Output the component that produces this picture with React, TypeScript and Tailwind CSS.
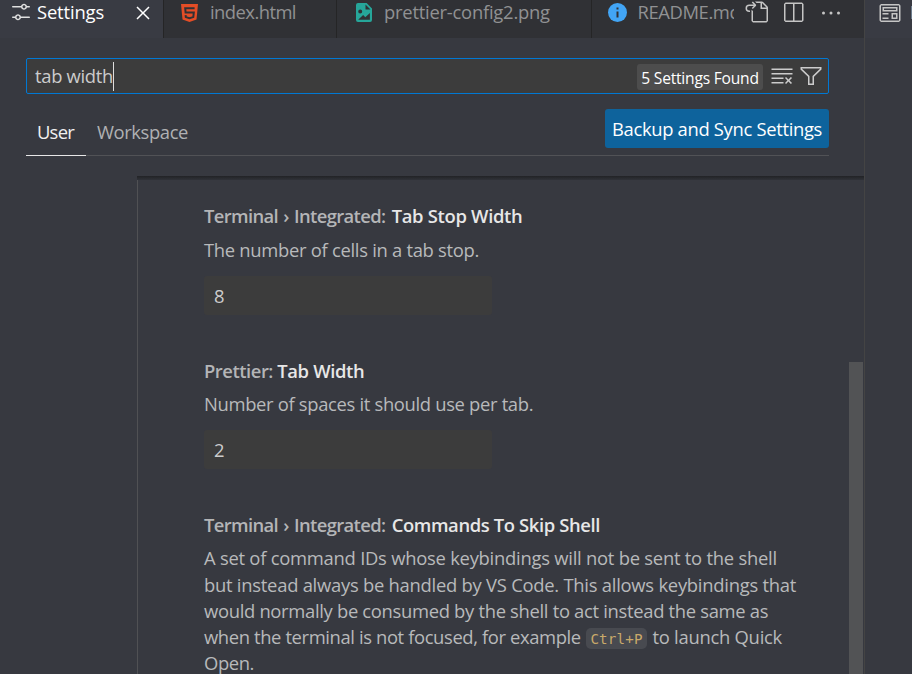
import type { ReactNode } from 'react';
import {
  VscSettings, VscClose, VscGoToFile, VscSplitHorizontal, VscEllipsis, VscClearAll, VscFilter, VscPreview,
} from 'react-icons/vsc';

function HtmlIcon() {
  return (
    <svg className="block h-[18px] w-[17px]" viewBox="0 0 17 18">
      <path fill="#e44d26" d="M0 0h17l-1.5 15.6L8.5 18l-7-2.4z" />
      <path fill="none" stroke="#303135" strokeWidth="2" d="M13.6 4.2H4.2l.4 4.3h8.2l-.5 4.6-3.8 1.2-3.7-1.2-.2-2" />
    </svg>
  );
}

function ImageIcon() {
  return (
    <svg className="block h-[19px] w-4" viewBox="0 0 16 19">
      <path
        fill="#26a69a"
        fillRule="evenodd"
        d="M2 0h8.6L16 5.4V17a2 2 0 0 1-2 2H2a2 2 0 0 1-2-2V2a2 2 0 0 1 2-2zM9.5 1.6v5h5zM4.2 6.6a2 2 0 1 0 0 4 2 2 0 0 0 0-4zM2.2 16.8h11.7V10l-4.6 4.2-2.2-2.1z"
      />
    </svg>
  );
}

function InfoIcon() {
  return (
    <svg className="block h-[19px] w-[19px]" viewBox="0 0 19 19">
      <circle cx="9.5" cy="9.5" r="9.5" fill="#42a5f5" />
      <path fill="#303135" d="M8.5 4.6h2v2h-2zM8.5 8.4h2v6h-2z" />
    </svg>
  );
}

function Setting({ category, name, nameClass, categoryClass, className, children }: {
  category: string; name: string; nameClass: string; categoryClass: string; className: string; children: ReactNode;
}) {
  return (
    <section className={className}>
      <h3 className="flex h-[26px] items-center font-semibold whitespace-pre">
        <span className={categoryClass}>{category}</span>
        <span className={nameClass}>{name}</span>
      </h3>
      <div className="text-[#b8b9bb]">{children}</div>
    </section>
  );
}

function NumberInput({ value }: { value: string }) {
  return (
    <div className="mt-[13px] flex h-[39px] w-[288px] items-center rounded-[3px] bg-[#3c3c3c] pl-[10px] pt-px text-[#cccccc]">{value}</div>
  );
}

export default function App() {
  return (
    <div className="flex h-[674px] w-[912px] overflow-hidden bg-[#373940] font-['Open_Sans','Noto_Sans',sans-serif] text-[18.4px] leading-[26.25px] whitespace-nowrap">
      <main className="flex w-[865px] shrink-0 flex-col border-r border-[#444444]">
        <header className="flex h-[38px] shrink-0 bg-[#303135] text-[#909193]">
          <div className="flex w-[164px] items-start border-r border-[#252526] bg-[#393b43] text-white">
            <VscSettings className="ml-[9px] h-6 w-6 shrink-0 text-[#e0e0e0]" />
            <span className="-mt-px ml-[4px] w-[94px] tracking-[-0.15px]">Settings</span>
            <VscClose className="mt-px h-6 w-6 shrink-0" />
          </div>
          <div className="flex w-[173px] items-start border-r border-[#252526]">
            <div className="mt-[4px] ml-[17px]"><HtmlIcon /></div>
            <span className="-mt-px ml-[12px] tracking-[-0.55px]">index.html</span>
          </div>
          <div className="flex w-[255px] items-start border-r border-[#252526]">
            <div className="mt-[3px] ml-[19px]"><ImageIcon /></div>
            <span className="-mt-px ml-[12px] tracking-[-0.23px]">prettier-config2.png</span>
          </div>
          <div className="flex w-[142px] items-start overflow-hidden">
            <div className="mt-[3px] ml-[16px] shrink-0"><InfoIcon /></div>
            <span className="-mt-px ml-[10.5px] tracking-[-0.4px]">README.md</span>
          </div>
          <div className="flex text-[#c5c5c5]">
            <VscGoToFile className="ml-[10px] h-6 w-6" />
            <VscSplitHorizontal className="mt-px ml-[13px] h-6 w-6" />
            <VscEllipsis className="mt-px ml-[13.5px] h-6 w-6" />
          </div>
        </header>

        <div className="mt-5 ml-[26px] w-[803px] shrink-0">
          <div className="flex h-9 items-center rounded-[2px] border border-[#0078d4] bg-[#3c3c3c] text-[#cccccc]">
            <span className="ml-[8px] tracking-[-0.31px]">tab width</span>
            <span className="h-[29px] w-px bg-[#dddddd]" />
            <span className="mt-[2px] ml-auto flex h-[26px] w-[126px] items-center justify-center rounded-[3px] bg-[#4d4d4d] pt-[3px] text-[15.6px] tracking-[-0.22px] text-white">5 Settings Found</span>
            <VscClearAll className="ml-[7px] h-6 w-6" />
            <VscFilter className="mr-[5.5px] ml-[4.5px] h-6 w-6" />
          </div>
          <div className="flex h-[62px] border-b border-[#515256]">
            <div className="-mb-px flex w-[60px] justify-center border-b border-[#e7e7e7] pt-[25px] pr-px tracking-[-0.7px] text-[#f0f0f0]">User</div>
            <div className="ml-[11px] pt-[25px] tracking-[-0.4px] text-[#b0b1b3]">Workspace</div>
            <button className="mt-[15px] ml-auto h-[39px] w-[224px] rounded-[3px] bg-[#0e639c] pt-px tracking-[-0.32px] text-white">Backup and Sync Settings</button>
          </div>
        </div>

        <div className="mt-5 ml-[137px] flex min-h-0 flex-1 flex-col overflow-hidden">
          <div className="h-1 shrink-0 bg-linear-to-b from-[#222326] to-[#303238]" />
          <div className="flex min-h-0 flex-1 border-l border-[#505154]">
            <div className="flex-1 pt-[23px] pl-[66px]">
              <Setting className="h-[155px]" category="Terminal › Integrated: " categoryClass="tracking-[-0.62px] [word-spacing:1px] pr-[1px] text-[#b4b5b7]" name="Tab Stop Width" nameClass="tracking-[-0.3px] text-[#e7e7e7]">
                <p className="mt-[7.5px] tracking-[-0.29px]">The number of cells in a tab stop.</p>
                <NumberInput value="8" />
              </Setting>
              <Setting className="h-[154px]" category="Prettier: " categoryClass="tracking-[-0.46px] text-[#b4b5b7]" name="Tab Width" nameClass="tracking-[-0.35px] text-[#e7e7e7]">
                <p className="mt-[7px] tracking-[-0.325px]">Number of spaces it should use per tab.</p>
                <NumberInput value="2" />
              </Setting>
              <Setting className="h-[154px]" category="Terminal › Integrated: " categoryClass="tracking-[-0.62px] [word-spacing:1px] pr-[1px] text-[#b4b5b7]" name="Commands To Skip Shell" nameClass="tracking-[-0.37px] text-[#e7e7e7]">
                <p className="mt-[6.75px] h-[27.25px] tracking-[-0.246px]">A set of command IDs whose keybindings will not be sent to the shell</p>
                <p className="h-[26px] tracking-[-0.252px]">but instead always be handled by VS Code. This allows keybindings that</p>
                <p className="h-[26px] tracking-[-0.313px]">would normally be consumed by the shell to act instead the same as</p>
                <p className="flex h-[26px] items-center">
                  <span className="w-[382px] tracking-[-0.38px]">when the terminal is not focused, for example</span>
                  <code className="mt-[3px] flex h-[21px] w-[61px] items-center justify-center rounded-[5px] bg-[#484a50] pt-[2px] font-['DejaVu_Sans_Mono',monospace] text-[14.2px] tracking-[0.15px] text-[#c9a96a]">Ctrl+P</code>
                  <span className="ml-[5.5px] tracking-[-0.26px]">to launch Quick</span>
                </p>
                <p className="tracking-[-0.4px]">Open.</p>
              </Setting>
            </div>
            <div className="mr-px w-[14px] pt-[182px]">
              <div className="h-full bg-[#525355]" />
            </div>
          </div>
        </div>
      </main>
      <aside className="w-[47px] shrink-0 overflow-hidden">
        <div className="flex h-[38px] bg-[#393b43]">
          <VscPreview className="mt-px ml-[12.5px] h-6 w-6 shrink-0 text-[#c5c5c5]" />
          <span className="mt-[6px] ml-[9.5px] h-[13px] w-px bg-[#6d7c8c]" />
        </div>
      </aside>
    </div>
  );
}
